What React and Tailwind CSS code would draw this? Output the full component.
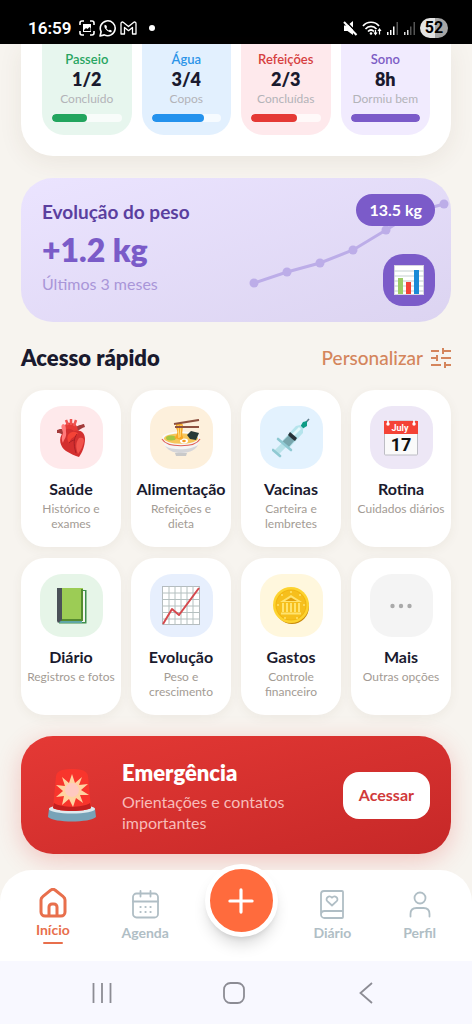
import React from 'react';
import { Plus } from 'lucide-react';

const HeartEmoji = () => (
  <svg width="30" height="38" viewBox="0 0 30 38" aria-hidden="true">
    <path d="M8 12 C6 9 4 10 1 11 L1 14 C4 14 5 14 7 17 Z" fill="#a33a3a" />
    <path d="M19 9 C22 6 24 6 28 5 L29 8 C26 9 24 10 22 12 Z" fill="#a33a3a" />
    <path d="M9 13 C8 5 10 3 15 4 C20 4 22 7 22 14 Z" fill="#e53935" />
    <path d="M10 1 l2 5 M15 0 v6 M20 1 l-2 6" stroke="#ef5350" strokeWidth="2.5" />
    <path d="M7 14 C2 19 4 28 10 32 C15 35 19 37 23 38 C26 34 29 27 29 20 C29 13 24 10 18 12 C13 8 9 10 7 14 Z" fill="#d32f2f" />
    <path d="M7 14 C6 9 4 7 7 5 C10 5 10 9 10 13 C11 18 8 20 7 24 C5 20 6 17 7 14 Z" fill="#ff7b7b" />
    <path d="M12 16 C15 12 20 12 22 15 C19 18 15 18 13 24 C11 21 11 18 12 16 Z" fill="#f44336" />
    <path d="M23 19 C26 18 28 19 28 22 C27 27 25 31 22 35 C20 30 19 24 23 19 Z" fill="#f2534c" />
    <path d="M21 15 C18 19 17 24 20 34 M13 24 C15 22 17 21 19 21" stroke="#a91f25" strokeWidth="1" fill="none" />
  </svg>
);

const NoodlesEmoji = () => (
  <svg width="40" height="38" viewBox="0 0 40 38" aria-hidden="true">
    <path d="M14 34 H26 L25 37 H15 Z" fill="#c9c9c9" />
    <path d="M1 19 C2 27 8 34 20 34 C32 34 38 27 39 19 Z" fill="#f5f5f5" />
    <path d="M4 27 C9 33 14 34 20 34 C30 34 35 30 37 26 C30 31 12 32 4 27 Z" fill="#d5d5d8" />
    <ellipse cx="20" cy="19" rx="19" ry="6.5" fill="#fafafa" />
    <ellipse cx="20" cy="19.5" rx="17" ry="5.2" fill="#f6c65b" />
    <path d="M1 20 C6 29 34 29 39 20" stroke="#e06055" strokeWidth="1.2" fill="none" />
    <ellipse cx="10" cy="19" rx="5" ry="2.5" fill="#a3c644" />
    <ellipse cx="23" cy="22" rx="4" ry="2.4" fill="#fff" />
    <ellipse cx="23" cy="22" rx="1.8" ry="1.2" fill="#f59a23" />
    <path d="M26 16 L30 12 L38 14 L35 21 L29 20 Z" fill="#283a37" />
    <path d="M15 5 C19 3 22 4 22 7 L21 16 C24 20 20 22 17 20 L13 19 C17 16 17 12 15 9 Z" fill="#f9a825" />
    <path d="M17 6 L18 19 M20 6 L19 18" stroke="#ffe082" strokeWidth="1" />
    <path d="M13 5 L38 1 M14 8 L38 8" stroke="#8d5140" strokeWidth="2.2" />
  </svg>
);

const SyringeEmoji = () => (
  <svg width="38" height="40" viewBox="0 0 38 40" aria-hidden="true">
    <path d="M37 1 L29 10" stroke="#607d8b" strokeWidth="1.6" />
    <path d="M35 3 L31 4 L28 9 L30 11 L35 8 Z" fill="#0e9c86" />
    <path d="M28 7 L24 8 L10 23 L17 30 L31 15 L31 10 Z" fill="#b5e4ec" />
    <path d="M27 9 L13 23 L15 25 L29 11 Z" fill="#e4f8fb" />
    <path d="M17 17 L10 24 L16 30 L23 22 Z" fill="#78a6ad" />
    <path d="M18 14 L25 20 L23 23 C20 21 18 19 16 17 Z" fill="#263238" />
    <path d="M13 26 L4 35" stroke="#b9e2e9" strokeWidth="6" />
    <path d="M6 21 L19 32" stroke="#8fc9d2" strokeWidth="2.6" strokeLinecap="round" />
    <path d="M1 32 L8 38" stroke="#8fc9d2" strokeWidth="2.6" strokeLinecap="round" />
  </svg>
);

const CalendarEmoji = () => (
  <svg width="34" height="36" viewBox="0 0 34 36" aria-hidden="true">
    <rect x="0.5" y="1" width="33" height="34" rx="1" fill="#fafafa" stroke="#bdbdc4" />
    <path d="M0 1 H34 V14 H0 Z" fill="#f44336" />
    <path d="M4 0 v4 M30 0 v4" stroke="#fff" strokeWidth="1.6" />
    <circle cx="4" cy="4" r="1.7" fill="#fff" />
    <circle cx="30" cy="4" r="1.7" fill="#fff" />
    <text x="16" y="11" textAnchor="middle" fontFamily="Roboto, sans-serif" fontSize="9" fontWeight="700" fill="#fff">July</text>
    <text x="17" y="31" textAnchor="middle" fontFamily="Roboto, sans-serif" fontSize="18" fontWeight="700" fill="#111">17</text>
  </svg>
);

const BookEmoji = () => (
  <svg width="31" height="36" viewBox="0 0 31 36" aria-hidden="true">
    <path d="M5 2 H30.5 V35.5 H3 Z" fill="#3f8f4d" />
    <path d="M5 3 H29 V34 H4 Z" fill="#f3f7ef" />
    <path d="M2 33 H26 V35 H4 Z" fill="#5fa7a5" />
    <path d="M5 0 H27 V32 H5 Z" fill="#9ccc55" />
    <path d="M25 1 H27 V33 H5 V31 H25 Z" fill="#558b2f" />
    <path d="M1 0 H6 V32 L2 35 L1 33 Z" fill="#4b5158" />
  </svg>
);

const TrendEmoji = () => (
  <svg width="38" height="39" viewBox="0 0 38 39" aria-hidden="true">
    <rect x="0.5" y="0.5" width="37" height="38" fill="#fff" stroke="#b5bcbf" />
    <path d="M7 0V39M13 0V39M19 0V39M25 0V39M31 0V39M0 7H38M0 13.500H38M0 20H38M0 26.500H38M0 33H38" stroke="#b5c0c0" strokeWidth="1" />
    <path d="M1 38 L10 23 L17 29 L37 2" stroke="#d5484d" strokeWidth="2" fill="none" strokeLinejoin="round" />
  </svg>
);

const CoinEmoji = () => (
  <svg width="36" height="38" viewBox="0 0 36 38" aria-hidden="true">
    <circle cx="19" cy="20" r="17" fill="#c98a0b" />
    <circle cx="18" cy="18" r="18" fill="#fdd32f" />
    <circle cx="18" cy="18" r="15.500" fill="#f1b512" />
    <circle cx="18" cy="18" r="14.500" fill="#f6bf1c" />
    <path d="M7 15 L18 8 L29 15 Z" fill="#ffe36e" />
    <path d="M10 16V25M14 16V25M18 16V25M22 16V25M26 16V25" stroke="#ffe36e" strokeWidth="2" />
    <path d="M8 26.500H28" stroke="#ffe36e" strokeWidth="2" />
    <path d="M12 14 L18 10.500 L24 14 Z" fill="#e3a10b" />
    <g fill="#ffe36e">
      <circle cx="9" cy="8" r="1" /><circle cx="27" cy="8" r="1" /><circle cx="18" cy="5" r="1" />
      <circle cx="5" cy="18" r="1" /><circle cx="31" cy="18" r="1" /><circle cx="12" cy="31" r="1" /><circle cx="24" cy="31" r="1" />
    </g>
  </svg>
);

const DotsIcon = () => (
  <svg width="22" height="6" viewBox="0 0 22 6" fill="#a9a9a9" aria-hidden="true">
    <circle cx="2.500" cy="3" r="2.200" />
    <circle cx="11" cy="3" r="2.200" />
    <circle cx="19.500" cy="3" r="2.200" />
  </svg>
);

const BarsEmoji = () => (
  <svg width="30" height="30" viewBox="0 0 30 30" aria-hidden="true">
    <rect x="0.5" y="0.5" width="29" height="29" fill="#fff" stroke="#d7d2e2" />
    <path d="M0 6H30M0 11H30M0 16H30M0 21H30M0 26H30" stroke="#c4cfd0" />
    <path d="M4 13H9V29H4Z" fill="#9ccc65" />
    <path d="M12 17H17V29H12Z" fill="#f44336" />
    <path d="M20 5H25V29H20Z" fill="#1a8ad6" />
  </svg>
);

const SirenEmoji = () => (
  <svg width="48" height="53" viewBox="0 0 48 53" aria-hidden="true">
    <path d="M1 40 C1 36 47 36 47 40 L48 48 C42 54 6 54 0 48 Z" fill="#78a3b8" />
    <ellipse cx="24" cy="40" rx="23" ry="4.500" fill="#dfe9ee" />
    <path d="M5 39 L8 7 C9 1 16 0 24 0 C32 0 39 1 40 7 L43 39 C37 43 11 43 5 39 Z" fill="#f8352c" />
    <path d="M6 34 L5 39 C11 43 37 43 43 39 L42 34 C34 39 14 39 6 34 Z" fill="#c31f1f" />
    <path d="M24 5 L27 14 L34 8 L31 16 L40 15 L33 21 L41 26 L32 26 L35 34 L28 29 L25 38 L21 30 L14 36 L16 27 L8 28 L15 22 L8 16 L17 17 L14 8 L21 14 Z" fill="#ffd3a1" />
    <circle cx="24" cy="21" r="7" fill="#ffc9c0" />
  </svg>
);

const stats = [
  { label: 'Passeio', value: '1/2', note: 'Concluído', percent: 50, tile: 'bg-[#e7f6ee]', text: 'text-[#27a562]', bar: 'bg-[#22a55e]' },
  { label: 'Água', value: '3/4', note: 'Copos', percent: 75, tile: 'bg-[#e2f0fe]', text: 'text-[#2b94e8]', bar: 'bg-[#2492ed]' },
  { label: 'Refeições', value: '2/3', note: 'Concluídas', percent: 66, tile: 'bg-[#fee9ec]', text: 'text-[#d63f40]', bar: 'bg-[#e53935]' },
  { label: 'Sono', value: '8h', note: 'Dormiu bem', percent: 100, tile: 'bg-[#f1ebfe]', text: 'text-[#7d5dc5]', bar: 'bg-[#7b5bc9]' },
];

const shortcuts = [
  { title: 'Saúde', text: 'Histórico e\nexames', tile: 'bg-[#fee9eb]', Icon: HeartEmoji },
  { title: 'Alimentação', text: 'Refeições e\ndieta', tile: 'bg-[#fdf0dc]', Icon: NoodlesEmoji },
  { title: 'Vacinas', text: 'Carteira e\nlembretes', tile: 'bg-[#e3f2fe]', Icon: SyringeEmoji },
  { title: 'Rotina', text: 'Cuidados diários', tile: 'bg-[#ede7f6]', Icon: CalendarEmoji },
  { title: 'Diário', text: 'Registros e fotos', tile: 'bg-[#e6f5e8]', Icon: BookEmoji },
  { title: 'Evolução', text: 'Peso e\ncrescimento', tile: 'bg-[#e7effd]', Icon: TrendEmoji },
  { title: 'Gastos', text: 'Controle\nfinanceiro', tile: 'bg-[#fff7dd]', Icon: CoinEmoji },
  { title: 'Mais', text: 'Outras opções', tile: 'bg-[#f4f4f4]', Icon: DotsIcon },
];

const weightPoints = [[8, 93], [41, 82], [74, 73], [107, 60], [140, 40], [169, 22], [198, 14]];

const StatusBar = () => (
  <header className="flex h-11 items-center justify-between bg-black pl-7 pr-6 pt-3 text-white">
    <div className="flex items-center gap-1">
      <span className="mr-1 font-['Roboto',sans-serif] text-[17px] leading-5 font-semibold">16:59</span>
      <svg width="16" height="16" viewBox="0 0 16 16" fill="none" stroke="#fff" strokeWidth="1.600" aria-hidden="true">
        <path d="M1 5V3a2 2 0 0 1 2-2h2M11 1h2a2 2 0 0 1 2 2v2M15 11v2a2 2 0 0 1-2 2h-2M5 15H3a2 2 0 0 1-2-2v-2" />
        <path d="M4 4h8v8H4z" fill="#fff" stroke="none" />
        <path d="M5 10l2-2 1.500 1 2-2 1 1v3H5z" fill="#000" stroke="none" />
      </svg>
      <svg width="17" height="17" viewBox="0 0 16 16" fill="none" stroke="#fff" strokeWidth="1.500" aria-hidden="true">
        <path d="M1 15l1-4a7 7 0 1 1 3 3z" strokeLinejoin="round" />
        <path d="M5.500 4.500c-1 1-.5 3 1.500 5s4 2.500 5 1.500l-.3-1.300-1.600-.6-.8.8c-1-.3-2-1.300-2.400-2.300l.7-.8-.6-1.700z" fill="#fff" stroke="none" />
      </svg>
      <svg width="17" height="14" viewBox="0 0 17 14" fill="none" stroke="#fff" strokeWidth="1.300" strokeLinejoin="round" aria-hidden="true">
        <path d="M1 13V2.500C1 1 2.500.6 3.500 1.400L8.500 5.500l5-4.100c1-.8 2.500-.4 2.500 1.100V13h-3.500V6.500l-4 3.200-4-3.200V13z" />
      </svg>
      <span className="ml-2 size-1.5 rounded-full bg-white" />
    </div>
    <div className="flex items-center gap-1">
      <svg width="15" height="15" viewBox="0 0 15 15" aria-hidden="true">
        <path d="M1 4.500h3.500L10 0v14l-5.500-4H1z" fill="#fff" />
        <path d="M2.500 0l12 12.500" stroke="#000" strokeWidth="1.600" />
        <path d="M1 1l12.500 13" stroke="#fff" strokeWidth="2" />
      </svg>
      <svg width="20" height="15" viewBox="0 0 20 15" fill="none" stroke="#fff" strokeWidth="1.700" aria-hidden="true">
        <path d="M1 5c4-5 12-5 16 0M3.500 8c3-3.500 8-3.500 11 0M6 10.500c2-2 4-2 6 0" />
        <circle cx="9" cy="12.500" r="1.300" fill="#fff" stroke="none" />
        <path d="M13.500 9v4m-1.500-1.500l1.500 2 1.500-2M17.500 13.500v-5M16 10l1.500-2L19 10" strokeWidth="1.200" />
      </svg>
      <svg width="13" height="13" viewBox="0 0 13 13" aria-hidden="true">
        <path d="M1 10h1.500v3H1zM4 8h1.500v5H4zM7 4.500h1.500V13H7z" fill="#fff" />
        <path d="M10.500 0H12v13h-1.500z" fill="#555" />
      </svg>
      <svg width="13" height="13" viewBox="0 0 13 13" aria-hidden="true">
        <path d="M1 10h1.500v3H1zM4 8h1.500v5H4z" fill="#ddd" />
        <path d="M7 4.500h1.500V13H7zM10.500 0H12v13h-1.500z" fill="#555" />
      </svg>
      <span className="flex h-5 w-7 items-center justify-center rounded-full bg-linear-to-r from-[#e4e4e4] from-52% to-[#a6a6a6] to-52% font-['Roboto',sans-serif] text-base font-bold text-black">52</span>
    </div>
  </header>
);

const BottomNav = () => (
  <nav className="relative z-10 flex h-[91px] items-center justify-around rounded-t-[32px] bg-white px-2.5">
    <a href="#inicio" className="flex flex-col items-center px-4 text-sm leading-4 font-bold text-[#e86f4c]">
      <svg width="28" height="30" viewBox="0 0 28 30" fill="none" stroke="currentColor" strokeWidth="3" strokeLinejoin="round" aria-hidden="true">
        <path d="M2 12c0-1.500.6-2.500 1.700-3.300l8-6.500c1.400-1.100 3.200-1.100 4.600 0l8 6.500C25.400 9.500 26 10.500 26 12v12a4 4 0 0 1-4 4H6a4 4 0 0 1-4-4z" />
        <path d="M10 28v-9a3 3 0 0 1 3-3h2a3 3 0 0 1 3 3v9" />
      </svg>
      <span className="mt-1">Início</span>
      <span className="mt-1 h-0.5 w-5 rounded-full bg-[#e86f4c]" />
    </a>
    <a href="#agenda" className="flex flex-col items-center px-4 text-sm leading-4 font-bold text-[#b0bec5]">
      <svg width="27" height="29" viewBox="0 0 27 29" fill="none" stroke="currentColor" strokeWidth="1.800" strokeLinecap="round" aria-hidden="true">
        <rect x="1" y="3.500" width="25" height="24" rx="3.500" />
        <path d="M1 11.500h25M8.500 1v5.500M18.500 1v5.500" />
        <path d="M8.500 17h.1M13.500 17h.1M18.500 17h.1M8.500 22h.1M13.500 22h.1M18.500 22h.1" strokeWidth="2.200" />
      </svg>
      <span className="mt-1.5">Agenda</span>
    </a>
    <button type="button" aria-label="Adicionar" className="-mt-1.5 flex size-[73px] items-center justify-center self-start rounded-full border-[5px] border-white bg-[#ff6b3d] text-white shadow-lg shadow-black/15">
      <Plus size={38} strokeWidth={2} />
    </button>
    <a href="#diario" className="flex flex-col items-center px-4 text-sm leading-4 font-bold text-[#b0bec5]">
      <svg width="24" height="29" viewBox="0 0 24 29" fill="none" stroke="currentColor" strokeWidth="1.800" strokeLinejoin="round" aria-hidden="true">
        <path d="M1 24.500V4a3 3 0 0 1 3-3h18a1 1 0 0 1 1 1v25a1 1 0 0 1-1 1H4.500A3.500 3.500 0 0 1 1 24.500C1 22.500 2.500 21 4.500 21H23" />
        <path d="M12 15.500l-4.700-4.300C4.800 8.500 9 4.500 12 7.700c3-3.200 7.200.8 4.700 3.500z" />
      </svg>
      <span className="mt-1.5">Diário</span>
    </a>
    <a href="#perfil" className="flex flex-col items-center px-4 text-sm leading-4 font-bold text-[#b0bec5]">
      <svg width="22" height="29" viewBox="0 0 22 29" fill="none" stroke="currentColor" strokeWidth="1.800" strokeLinecap="round" aria-hidden="true">
        <circle cx="11" cy="8" r="5.500" />
        <path d="M1.500 26.500V24c0-4 2-6 6-6h7c4 0 6 2 6 6v2.500" />
      </svg>
      <span className="mt-1.5">Perfil</span>
    </a>
  </nav>
);

const SystemNav = () => (
  <div className="relative z-10 grid h-[63px] grid-cols-3 place-items-center bg-[#f8f8ff] pl-9 pr-10">
    <button type="button" aria-label="Recentes">
      <svg width="20" height="22" viewBox="0 0 20 22" stroke="#8c8c94" strokeWidth="1.800" aria-hidden="true">
        <path d="M1.500 1v20M10 1v20M18.500 1v20" />
      </svg>
    </button>
    <button type="button" aria-label="Tela inicial">
      <svg width="22" height="22" viewBox="0 0 22 22" fill="none" stroke="#8c8c94" strokeWidth="1.800" aria-hidden="true">
        <rect x="1" y="1" width="20" height="20" rx="6.500" />
      </svg>
    </button>
    <button type="button" aria-label="Voltar">
      <svg width="14" height="22" viewBox="0 0 14 22" fill="none" stroke="#8c8c94" strokeWidth="1.800" aria-hidden="true">
        <path d="M13 1L1.500 11 13 21" />
      </svg>
    </button>
  </div>
);

export default function App() {
  return (
    <div className="flex min-h-screen flex-col bg-[#f7f4ef] font-['Lato','Open_Sans',sans-serif] text-[#1a1a2e]">
      <StatusBar />

      <main className="flex flex-1 flex-col px-[21px] pb-4">
        <section className="grid grid-cols-4 gap-2.5 rounded-b-[32px] bg-white px-[21px] pb-[21px] shadow-[0_6px_24px_rgba(90,70,40,0.08)]">
          {stats.map((stat) => (
            <div key={stat.label} className={`flex flex-col items-center rounded-b-[22px] px-2.5 pt-[7px] pb-[13px] ${stat.tile}`}>
              <span className={`text-[13px] leading-4 font-semibold ${stat.text}`}>{stat.label}</span>
              <span className="text-lg leading-6 font-extrabold">{stat.value}</span>
              <span className="text-xs leading-4 whitespace-nowrap text-[#b3b3b8]">{stat.note}</span>
              <div className="mt-[7px] h-2 w-full overflow-hidden rounded-full bg-white/70">
                <div className={`h-full rounded-full ${stat.bar}`} style={{ width: `${stat.percent}%` }} />
              </div>
            </div>
          ))}
        </section>

        <section className="relative mt-[22px] flex justify-between overflow-hidden rounded-[32px] bg-linear-to-br from-[#ebe4ff] to-[#dcd4f1] py-4 pr-4 pl-[21px]">
          <svg className="absolute top-3 right-0" width="205" height="104" viewBox="0 0 205 104" aria-hidden="true">
            <polyline points={weightPoints.join(' ')} fill="none" stroke="#bcade8" strokeWidth="3" />
            {weightPoints.map(([x, y]) => (
              <circle key={x} cx={x} cy={y} r="4.500" fill="#bcade8" />
            ))}
          </svg>
          <div className="pt-1.5 pb-2.5">
            <h2 className="text-[19px] leading-6 font-bold text-[#5b3f9f]">Evolução do peso</h2>
            <p className="mt-2 text-[32px] leading-9 font-extrabold text-[#7a5bc8]">+1.2 kg</p>
            <p className="mt-1 text-base leading-6 text-[#a996d8]">Últimos 3 meses</p>
          </div>
          <div className="relative flex flex-col items-end justify-between">
            <span className="rounded-full bg-[#7b5bc9] px-[13px] py-1.5 text-base leading-5 font-bold text-white">13.5 kg</span>
            <button type="button" aria-label="Ver gráfico" className="flex size-[52px] items-center justify-center rounded-[20px] bg-[#7b5bc9]">
              <BarsEmoji />
            </button>
          </div>
        </section>

        <section className="mt-5">
          <div className="flex items-center justify-between">
            <h2 className="text-[22px] leading-8 font-extrabold">Acesso rápido</h2>
            <button type="button" className="flex items-center gap-2 text-[19px] leading-8 font-medium text-[#d4855c]">
              Personalizar
              <svg width="20" height="20" viewBox="2 2 20 20" fill="none" stroke="currentColor" strokeWidth="2" aria-hidden="true">
                <path d="M2 5h8M14 5h8M14 2v6M2 12h6M12 12h10M8 9v6M2 19h10M16 19h6M16 16v6" />
              </svg>
            </button>
          </div>

          <div className="mt-4 grid grid-cols-4 gap-x-2.5 gap-y-[11px]">
            {shortcuts.map(({ title, text, tile, Icon }) => (
              <a key={title} href="#atalho" className="flex h-[157px] flex-col items-center rounded-3xl bg-white px-1 pt-4 text-center shadow-[0_3px_12px_rgba(90,70,40,0.06)]">
                <span className={`flex size-[63px] items-center justify-center rounded-[22px] ${tile}`}>
                  <Icon />
                </span>
                <span className="mt-2.5 text-base leading-5 font-bold">{title}</span>
                <span className="mt-0.5 text-xs leading-[15px] whitespace-pre-line text-[#a39b94]">{text}</span>
              </a>
            ))}
          </div>
        </section>

        <section className="mt-[21px] flex items-center rounded-[32px] bg-linear-to-br from-[#e53935] to-[#c62828] px-[21px] py-[21px] text-white shadow-[0_6px_24px_rgba(229,57,53,0.25)]">
          <div className="flex w-20 shrink-0 pl-1.5">
            <SirenEmoji />
          </div>
          <div className="flex-1">
            <h2 className="text-[22px] leading-8 font-extrabold">Emergência</h2>
            <p className="mt-0.5 w-44 text-base leading-[21px] text-[#f8bcb9]">Orientações e contatos importantes</p>
          </div>
          <button type="button" className="h-[47px] rounded-2xl bg-white px-4 text-base font-bold text-[#d0393a]">Acessar</button>
        </section>
      </main>

      <BottomNav />
      <SystemNav />
    </div>
  );
}
